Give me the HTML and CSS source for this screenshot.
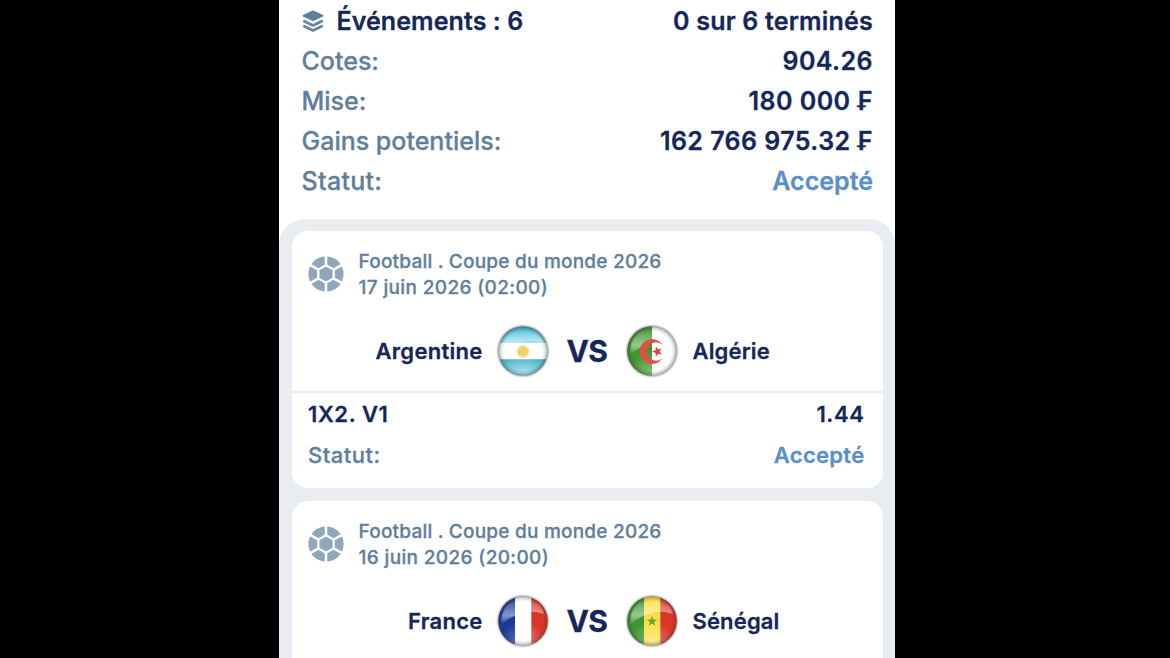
FILE: index.html
```html
<!DOCTYPE html>
<html lang="fr">
<head>
<meta charset="utf-8">
<title>Détails du coupon</title>
<link rel="stylesheet" href="styles.css">
</head>
<body>
<svg class="defs" width="0" height="0" aria-hidden="true">
  <defs>
    <symbol id="ball" viewBox="0 0 36 36">
      <circle cx="18" cy="18" r="17.6" fill="#90a6bb"/>
      <path d="M18 9.4V0M18 26.6V36M10.5 13.7L2 8.8M25.5 13.7L34 8.8M10.5 22.3L2 27.2M25.5 22.3L34 27.2" stroke="#fff" stroke-width="2.5"/>
      <path d="M18 9.2L25.7 13.6V22.4L18 26.8L10.3 22.4V13.6Z" fill="#90a6bb" stroke="#fff" stroke-width="2.3"/>
    </symbol>
    <clipPath id="disc"><circle cx="27" cy="27" r="24.6"/></clipPath>
    <linearGradient id="gloss" x1="0" y1="0" x2="0" y2="1">
      <stop offset="0" stop-color="#fff" stop-opacity="0"/>
      <stop offset=".25" stop-color="#fff" stop-opacity=".3"/>
      <stop offset=".65" stop-color="#fff" stop-opacity=".6"/>
      <stop offset="1" stop-color="#fff" stop-opacity=".1"/>
    </linearGradient>
    <radialGradient id="glow" cx=".5" cy="1" r=".5">
      <stop offset="0" stop-color="#fff" stop-opacity=".4"/>
      <stop offset="1" stop-color="#fff" stop-opacity="0"/>
    </radialGradient>
    <radialGradient id="rim">
      <stop offset=".8" stop-color="#334" stop-opacity="0"/>
      <stop offset=".93" stop-color="#334" stop-opacity=".2"/>
      <stop offset="1" stop-color="#334" stop-opacity=".5"/>
    </radialGradient>
    <radialGradient id="halo">
      <stop offset=".88" stop-color="#555" stop-opacity=".6"/>
      <stop offset="1" stop-color="#555" stop-opacity="0"/>
    </radialGradient>
    <linearGradient id="sky" x1="0" y1="0" x2="0" y2="1">
      <stop offset="0" stop-color="#35abc6"/><stop offset=".3" stop-color="#7fd6ea"/><stop offset=".65" stop-color="#48adc4"/><stop offset="1" stop-color="#7ce4ee"/>
    </linearGradient>
    <symbol id="shine" viewBox="0 0 54 54">
      <path d="M5.5 30C4 14 15 4.5 27 4.5S47 12 48 20Q36 16 26 19T5.5 30Z" fill="url(#gloss)" opacity=".8"/>
      <circle cx="27" cy="27" r="24.6" fill="url(#glow)"/>
      <circle cx="27" cy="27" r="24.6" fill="url(#rim)"/>
    </symbol>
  </defs>
</svg>
<main class="screen">
  <section class="summary">
    <div class="row">
      <div class="events">
        <svg class="layers" viewBox="0 0 22 22"><path d="M11 1.2L20.6 5.8L11 10.4L1.4 5.8Z" fill="#5f7f9e" stroke="#5f7f9e" stroke-width="1.6" stroke-linejoin="round"/><path d="M1.3 10.8L11 15.4L20.7 10.8M1.3 15.8L11 20.4L20.7 15.8" fill="none" stroke="#6685a3" stroke-width="2.8" stroke-linejoin="round"/></svg>
        <span class="count">Événements : 6</span>
      </div>
      <span class="done">0 sur 6 terminés</span>
    </div>
    <div class="row"><span class="label">Cotes:</span><span class="value">904.26</span></div>
    <div class="row"><span class="label">Mise:</span><span class="value">180 000 ₣</span></div>
    <div class="row"><span class="label">Gains potentiels:</span><span class="value">162 766 975.32 ₣</span></div>
    <div class="row"><span class="label status">Statut:</span><span class="accepted">Accepté</span></div>
  </section>
  <section class="bets">
    <article class="card">
      <header class="head">
        <svg class="ball"><use href="#ball"/></svg>
        <div class="meta"><div>Football . Coupe du monde 2026</div><div class="date">17 juin 2026 (02:00)</div></div>
      </header>
      <div class="match">
        <span class="team home">Argentine</span>
        <svg class="flag" viewBox="0 0 54 54">
          <circle cx="27" cy="27" r="27" fill="url(#halo)"/>
          <g clip-path="url(#disc)"><path d="M0 0H54V54H0Z" fill="url(#sky)"/><path d="M0 18.7H54V35.3H0Z" fill="#fff"/><circle cx="27" cy="27.5" r="5.4" fill="#f0d060"/><circle cx="27" cy="27.5" r="6" fill="none" stroke="#f0d67a" stroke-width="1.2" stroke-dasharray="1 1"/></g>
          <use href="#shine"/>
        </svg>
        <span class="vs">VS</span>
        <svg class="flag" viewBox="0 0 54 54">
          <circle cx="27" cy="27" r="27" fill="url(#halo)"/>
          <g clip-path="url(#disc)"><path d="M0 0H27V54H0Z" fill="#3f962c"/><path d="M27 0H54V54H27Z" fill="#fff"/></g>
          <use href="#shine"/>
          <path d="M37.5 20.8A12.4 12.4 0 1 0 37.5 34.2A9.3 9.3 0 1 1 37.5 20.8Z" fill="#e0504a"/><path d="M27 27.6L30.6 26.3L30.8 22.5L33.1 25.5L36.7 24.5L34.6 27.6L36.7 30.7L33.1 29.7L30.8 32.7L30.6 28.9Z" fill="#d9403c"/>
        </svg>
        <span class="team away">Algérie</span>
      </div>
      <div class="outcome">
        <div class="line pick"><span>1X2. V1</span><span>1.44</span></div>
        <div class="line"><span class="state">Statut:</span><span class="accepted">Accepté</span></div>
      </div>
    </article>
    <article class="card">
      <header class="head">
        <svg class="ball"><use href="#ball"/></svg>
        <div class="meta"><div>Football . Coupe du monde 2026</div><div class="date">16 juin 2026 (20:00)</div></div>
      </header>
      <div class="match">
        <span class="team home">France</span>
        <svg class="flag" viewBox="0 0 54 54">
          <circle cx="27" cy="27" r="27" fill="url(#halo)"/>
          <g clip-path="url(#disc)"><path d="M0 0H19V54H0Z" fill="#18389a"/><path d="M19 0H35.5V54H19Z" fill="#fff"/><path d="M35.5 0H54V54H35.5Z" fill="#dc3527"/></g>
          <use href="#shine"/>
        </svg>
        <span class="vs">VS</span>
        <svg class="flag" viewBox="0 0 54 54">
          <circle cx="27" cy="27" r="27" fill="url(#halo)"/>
          <g clip-path="url(#disc)"><path d="M0 0H19V54H0Z" fill="#3f962c"/><path d="M19 0H35.5V54H19Z" fill="#fadf45"/><path d="M35.5 0H54V54H35.5Z" fill="#dc3527"/></g>
          <use href="#shine"/>
          <path d="M27 21.8L28.3 25.6H32.2L29.1 27.9L30.3 31.8L27 29.4L23.7 31.8L24.9 27.9L21.8 25.6H25.7Z" fill="#6aa336"/>
        </svg>
        <span class="team away">Sénégal</span>
      </div>
      <div class="outcome"></div>
    </article>
  </section>
</main>
</body>
</html>
```
FILE: styles.css
```css
* { box-sizing: border-box; }
body {
  margin: 0;
  height: 658px;
  overflow: hidden;
  background: #000;
  font-family: Inter, "Liberation Sans", sans-serif;
  color: #15275a;
  -webkit-text-stroke: .3px;
}
.defs { display: block; }
.screen {
  width: 616px;
  height: 658px;
  margin: 0 auto 0 279px;
  overflow: hidden;
  background: #fff;
}
.summary { padding: 1px 22px 0 22.5px; height: 218.5px; }
.row {
  display: flex;
  justify-content: space-between;
  align-items: center;
  height: 40px;
  font-size: 25px;
  white-space: nowrap;
}
.events { display: flex; align-items: center; gap: 13px; }
.layers { width: 22px; height: 22px; }
.count, .done, .value { font-weight: 600; }
.count { letter-spacing: .08px; }
.done { letter-spacing: .2px; }
.value { letter-spacing: .45px; }
.label { color: #5f7f9e; font-weight: 500; }
.label.status { letter-spacing: .3px; }
.accepted { color: #5b8fcc; font-weight: 600; }
.bets {
  display: flex;
  flex-direction: column;
  gap: 13px;
  padding: 12.5px 12.5px 0 13px;
  background: #e9edf2;
  border-radius: 26px 26px 0 0;
}
.card { height: 257px; flex: none; background: #fff; border-radius: 16px; }
.head { display: flex; align-items: center; gap: 14px; height: 87px; padding: 0 16px; }
.ball { width: 36px; height: 36px; margin-top: -1px; }
.meta {
  padding-left: .5px;
  font-size: 19px;
  font-weight: 500;
  line-height: 26px;
  letter-spacing: .22px;
  color: #5f7f9e;
  white-space: nowrap;
}
.date { letter-spacing: .36px; }
.match {
  display: grid;
  grid-template-columns: 203.5px 54px 75px 54px 1fr;
  align-items: center;
  height: 66px;
}
.team { font-size: 22px; font-weight: 600; letter-spacing: .15px; }
.home { text-align: right; padding-right: 13px; letter-spacing: .27px; }
.away { padding-left: 14px; }
.flag { width: 54px; height: 54px; }
.vs { text-align: center; font-size: 30px; font-weight: 700; letter-spacing: -.4px; }
.outcome { margin-top: 7px; border-top: 2px solid #e9ecf0; padding: 0 18px 0 16px; }
.line { display: flex; justify-content: space-between; align-items: center; height: 41px; font-size: 22px; letter-spacing: .5px; }
.line .accepted { letter-spacing: .3px; }
.pick { font-weight: 600; letter-spacing: .6px; }
.state { color: #5f7f9e; font-weight: 500; }
```
